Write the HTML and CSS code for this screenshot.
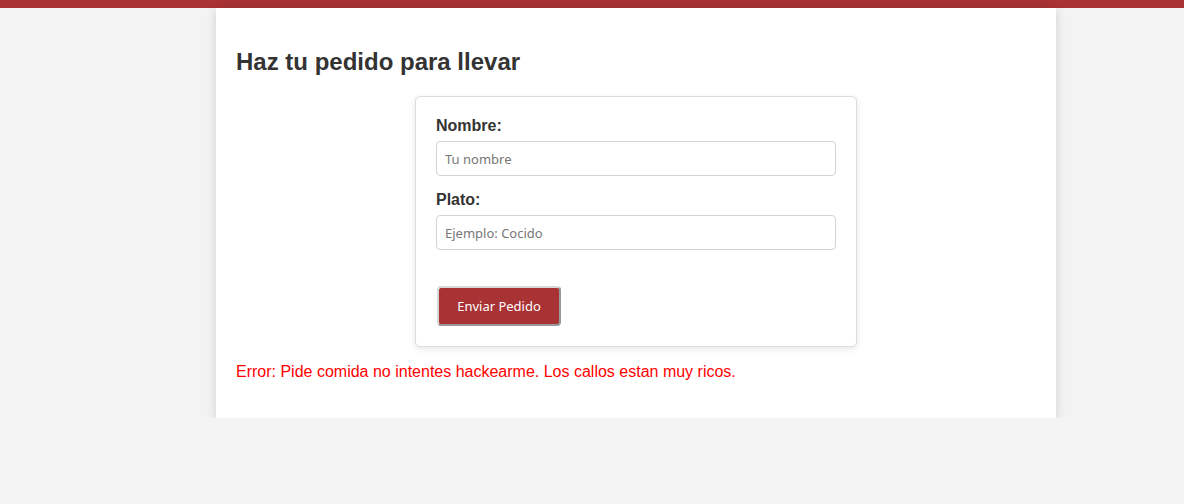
FILE: index.html
```html
<!DOCTYPE html>
<html lang="es">
<head>
<meta charset="utf-8">
<title>Pedido para llevar</title>
<link rel="stylesheet" href="styles.css">
</head>
<body>
<div class="topbar"></div>
<main class="container">
  <h2 class="title">Haz tu pedido para llevar</h2>
  <form class="order-card">
    <label class="field-label" for="nombre">Nombre:</label>
    <input class="field-input" id="nombre" type="text" placeholder="Tu nombre">
    <label class="field-label" for="plato">Plato:</label>
    <input class="field-input" id="plato" type="text" placeholder="Ejemplo: Cocido">
    <button class="submit-btn" type="button">Enviar Pedido</button>
  </form>
  <p class="error">Error: Pide comida no intentes hackearme. Los callos estan muy ricos.</p>
</main>
</body>
</html>
```
FILE: styles.css
```css
html, body {
  margin: 0;
  padding: 0;
}
body {
  background: #f3f3f3;
  font-family: "Liberation Sans", Arial, sans-serif;
  color: #333;
}
.topbar {
  height: 8px;
  background: #a83234;
}
.container {
  width: 840px;
  box-sizing: border-box;
  margin-left: 216px;
  padding: 20px 20px 21px;
  background: #fff;
  box-shadow: 0 2px 10px rgba(0, 0, 0, 0.14);
}
.title {
  font-size: 24px;
  font-weight: bold;
  margin: 20px 0;
  color: #333;
}
.order-card {
  width: 442px;
  box-sizing: border-box;
  margin: 0 auto;
  padding: 20px;
  border: 1px solid #dcdcdc;
  border-radius: 5px;
  background: #fff;
  box-shadow: 0 2px 6px rgba(0, 0, 0, 0.1);
  display: flex;
  flex-direction: column;
  align-items: flex-start;
}
.field-label {
  font-size: 16px;
  font-weight: bold;
  color: #333;
  line-height: 18px;
  margin-bottom: 6px;
}
.field-input {
  width: 400px;
  height: 35px;
  box-sizing: border-box;
  padding: 0 8px;
  border: 1px solid #d4d4d4;
  border-radius: 4px;
  font-family: "Noto Sans", "Open Sans", sans-serif;
  font-size: 13px;
  color: #333;
  margin: 0 0 15px 0;
  outline: none;
}
.field-input::placeholder {
  color: #777;
}
.submit-btn {
  margin-top: 21px;
  margin-left: 1px;
  width: 124px;
  height: 40px;
  box-sizing: border-box;
  background: #a83234;
  color: #fff;
  border: 2px solid;
  border-color: #d8d8d8 #999 #999 #d8d8d8;
  border-radius: 4px;
  font-family: "Noto Sans", "Open Sans", sans-serif;
  font-size: 13px;
  padding: 0;
  cursor: pointer;
}
.error {
  color: #f00;
  font-size: 16px;
  margin: 16px 0;
  line-height: 18.4px;
}
```
